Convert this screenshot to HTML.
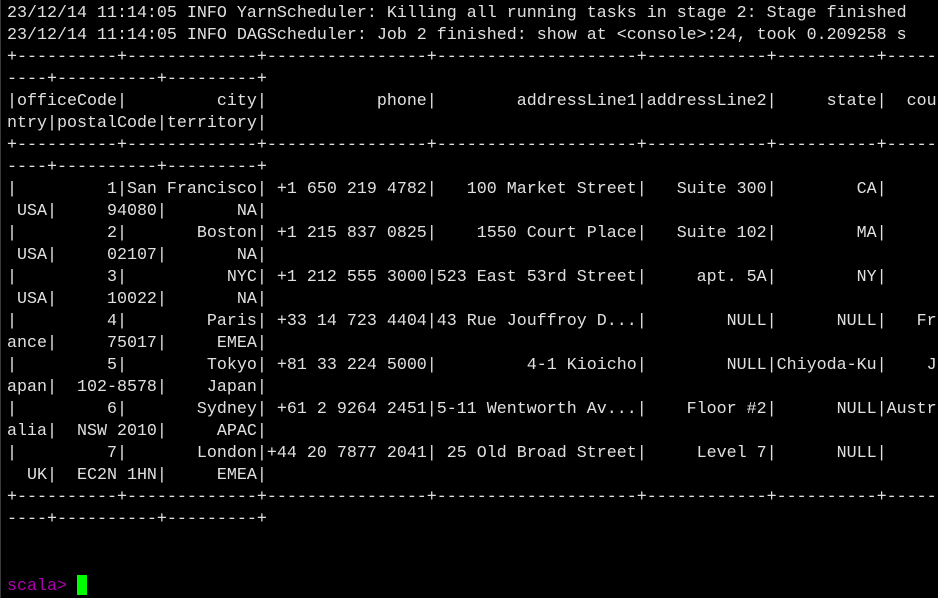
<!DOCTYPE html>
<html><head><meta charset="utf-8"><style>
html,body{margin:0;padding:0;background:#000;width:938px;height:598px;overflow:hidden}
body{position:relative;border-left:1px solid #3a3a3a;box-sizing:border-box}
pre{position:absolute;left:6px;top:3px;margin:0;font-family:"Liberation Mono",monospace;font-size:16.67px;line-height:22px;color:#e0e0e0;white-space:pre}
.p{color:#b000b0}
.c{display:inline-block;width:10px;height:20px;background:#00ff00;vertical-align:-5px}
</style></head><body><pre>23/12/14 11:14:05 INFO YarnScheduler: Killing all running tasks in stage 2: Stage finished
23/12/14 11:14:05 INFO DAGScheduler: Job 2 finished: show at &lt;console&gt;:24, took 0.209258 s
+----------+-------------+----------------+--------------------+------------+----------+-----
----+----------+---------+
|officeCode|         city|           phone|        addressLine1|addressLine2|     state|  cou
ntry|postalCode|territory|
+----------+-------------+----------------+--------------------+------------+----------+-----
----+----------+---------+
|         1|San Francisco| +1 650 219 4782|   100 Market Street|   Suite 300|        CA|     
 USA|     94080|       NA|
|         2|       Boston| +1 215 837 0825|    1550 Court Place|   Suite 102|        MA|     
 USA|     02107|       NA|
|         3|          NYC| +1 212 555 3000|523 East 53rd Street|     apt. 5A|        NY|     
 USA|     10022|       NA|
|         4|        Paris| +33 14 723 4404|43 Rue Jouffroy D...|        NULL|      NULL|   Fr
ance|     75017|     EMEA|
|         5|        Tokyo| +81 33 224 5000|         4-1 Kioicho|        NULL|Chiyoda-Ku|    J
apan|  102-8578|    Japan|
|         6|       Sydney| +61 2 9264 2451|5-11 Wentworth Av...|    Floor #2|      NULL|Austr
alia|  NSW 2010|     APAC|
|         7|       London|+44 20 7877 2041| 25 Old Broad Street|     Level 7|      NULL|     
  UK|  EC2N 1HN|     EMEA|
+----------+-------------+----------------+--------------------+------------+----------+-----
----+----------+---------+


<span class="p">scala&gt;</span> <span class="c"></span></pre></body></html>
